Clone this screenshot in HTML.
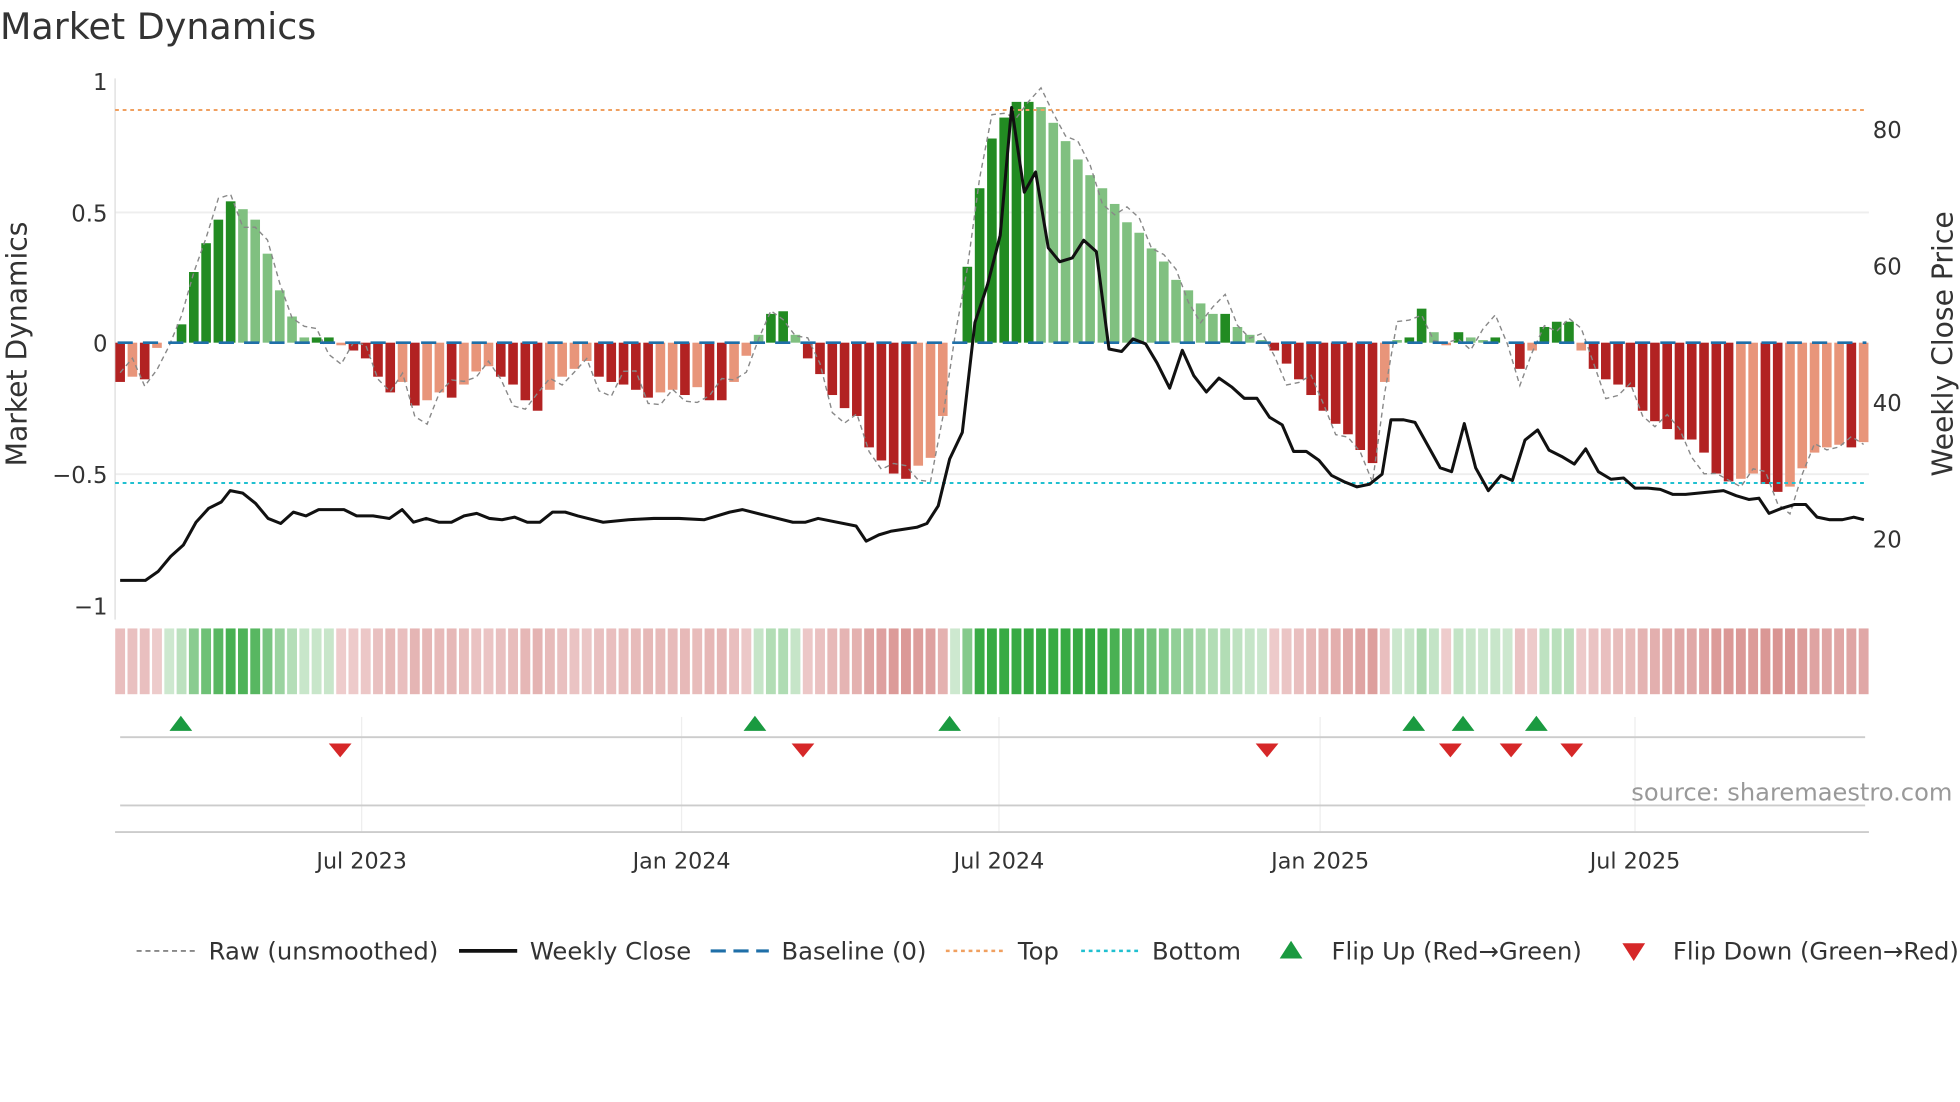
<!DOCTYPE html>
<html><head><meta charset="utf-8"><style>
html,body{margin:0;padding:0;background:#fff;}
svg{display:block;font-family:"DejaVu Sans","Liberation Sans",sans-serif;}
</style></head><body>
<svg id="s" width="1960" height="1102" viewBox="0 0 1550 871.5" xmlns="http://www.w3.org/2000/svg">
<rect width="1550" height="871.5" fill="#fff"/>
<text x="0" y="31" font-size="28.8" fill="#333">Market Dynamics</text>
<g id="grid"></g>
<g id="bars"></g>
<g id="lines"></g>
<g font-size="18" fill="#333" text-anchor="end">
<text x="85" y="71">1</text><text x="85" y="175">0.5</text><text x="85" y="278">0</text>
<text x="85" y="382">−0.5</text><text x="85" y="486">−1</text>
</g>
<g font-size="18" fill="#333">
<text x="1481" y="109">80</text><text x="1481" y="217">60</text><text x="1481" y="325">40</text><text x="1481" y="433">20</text>
</g>
<text transform="translate(21,272) rotate(-90)" font-size="22.3" fill="#333" text-anchor="middle">Market Dynamics</text>
<text transform="translate(1544,272) rotate(-90)" font-size="22.3" fill="#333" text-anchor="middle">Weekly Close Price</text>
<g font-size="17.6" fill="#333" text-anchor="middle">
<text x="286" y="687">Jul 2023</text><text x="539" y="687">Jan 2024</text><text x="790" y="687">Jul 2024</text>
<text x="1044" y="687">Jan 2025</text><text x="1293" y="687">Jul 2025</text>
</g>
<text x="1544" y="633" font-size="19.1" fill="#999" text-anchor="end">source: sharemaestro.com</text>
<g font-size="19.2" fill="#333">
<line x1="108" y1="752" x2="154" y2="752" stroke="#888" stroke-width="1.5" stroke-dasharray="4,3"/>
<text x="165" y="759">Raw (unsmoothed)</text>
<line x1="363" y1="752" x2="409" y2="752" stroke="#111" stroke-width="3"/>
<text x="419" y="759">Weekly Close</text>
<line x1="562" y1="752" x2="608" y2="752" stroke="#1f6fa8" stroke-width="2.5" stroke-dasharray="12,6"/>
<text x="618" y="759">Baseline (0)</text>
<line x1="748" y1="752" x2="794" y2="752" stroke="#f0a060" stroke-width="2" stroke-dasharray="3,3"/>
<text x="805" y="759">Top</text>
<line x1="855" y1="752" x2="901" y2="752" stroke="#20c0d0" stroke-width="2" stroke-dasharray="3,3"/>
<text x="911" y="759">Bottom</text>
<path d="M1012,758 L1021,744 L1030,758Z" fill="#1a9a40"/>
<text x="1053" y="759">Flip Up (Red→Green)</text>
<path d="M1283,746 L1301,746 L1292,760Z" fill="#d62728"/>
<text x="1323" y="759">Flip Down (Green→Red)</text>
</g>
</svg>
<script>
var NS="http://www.w3.org/2000/svg";
function el(p,t,a){var e=document.createElementNS(NS,t);for(var k in a)e.setAttribute(k,a[k]);p.appendChild(e);return e;}
var v=[-0.15,-0.13,-0.14,-0.02,0,0.07,0.27,0.38,0.47,0.54,0.51,0.47,0.34,0.2,0.1,0.02,0.02,0.02,-0.01,-0.03,-0.06,-0.13,-0.19,-0.15,-0.24,-0.22,-0.19,-0.21,-0.16,-0.11,-0.09,-0.13,-0.16,-0.22,-0.26,-0.18,-0.13,-0.1,-0.07,-0.13,-0.15,-0.16,-0.18,-0.21,-0.19,-0.18,-0.2,-0.17,-0.22,-0.22,-0.15,-0.05,0.03,0.11,0.12,0.03,-0.06,-0.12,-0.2,-0.25,-0.28,-0.4,-0.45,-0.5,-0.52,-0.47,-0.44,-0.28,0,0.29,0.59,0.78,0.86,0.92,0.92,0.9,0.84,0.77,0.7,0.64,0.59,0.53,0.46,0.42,0.36,0.31,0.24,0.2,0.15,0.11,0.11,0.06,0.03,0.01,-0.03,-0.08,-0.14,-0.2,-0.26,-0.31,-0.35,-0.41,-0.46,-0.15,0.01,0.02,0.13,0.04,-0.01,0.04,0.02,0.01,0.02,0,-0.1,-0.03,0.06,0.08,0.08,-0.03,-0.1,-0.14,-0.16,-0.17,-0.26,-0.3,-0.33,-0.37,-0.37,-0.42,-0.5,-0.53,-0.52,-0.5,-0.54,-0.57,-0.55,-0.48,-0.42,-0.4,-0.39,-0.4,-0.38];
var s=document.getElementById('s'),g=document.getElementById('grid'),b=document.getElementById('bars'),L=document.getElementById('lines');
function Y(x){return 271-x*207;}
[168,375].forEach(function(y){el(g,'line',{x1:91,x2:1478,y1:y,y2:y,stroke:'#eee','stroke-width':1.5});});
el(g,'line',{x1:91,x2:91,y1:62,y2:490,stroke:'#ddd','stroke-width':1});
[286,539,790,1044,1293].forEach(function(x){el(g,'line',{x1:x,x2:x,y1:567,y2:658,stroke:'#eee','stroke-width':1});});
el(g,'line',{x1:95,x2:1475,y1:583,y2:583,stroke:'#ccc','stroke-width':1.5});
el(g,'line',{x1:95,x2:1475,y1:637,y2:637,stroke:'#ccc','stroke-width':1.5});
el(g,'line',{x1:91,x2:1478,y1:658,y2:658,stroke:'#ccc','stroke-width':1.5});
var raw=[];
for(var i=0;i<v.length;i++){
 var x=95+i*9.71,val=v[i],prev=i?v[i-1]:0,dark=Math.abs(val)>=Math.abs(prev);
 var col=val>=0?(dark?'#228b22':'#80c080'):(dark?'#b22222':'#e8957a');
 var y0=Y(0),y1=Y(val);
 if(Math.abs(val)>0.004)el(b,'rect',{x:x-3.8,y:Math.min(y0,y1),width:7.6,height:Math.abs(y1-y0),fill:col});
 var a=Math.min(1,Math.abs(val)/0.6);
 var hc=val>=0?'rgb('+Math.round(205-150*a)+','+Math.round(232-62*a)+','+Math.round(207-140*a)+')':'rgb('+Math.round(238-22*a)+','+Math.round(205-60*a)+','+Math.round(205-62*a)+')';
 el(b,'rect',{x:x-3.9,y:497,width:7.8,height:52,fill:hc});
 var n=Math.sin(i*1.7)*0.05+Math.cos(i*0.9)*0.04;
 raw.push([x,Y(val*1.03+n)]);
}
el(L,'polyline',{points:raw.map(function(p){return p.join(',');}).join(' '),fill:'none',stroke:'#888','stroke-width':1.1,'stroke-dasharray':'4,3'});
el(L,'line',{x1:91,x2:1476,y1:87,y2:87,stroke:'#f0a060','stroke-width':1.6,'stroke-dasharray':'3,3'});
el(L,'line',{x1:91,x2:1476,y1:382,y2:382,stroke:'#20c0d0','stroke-width':1.6,'stroke-dasharray':'3,3'});
el(L,'line',{x1:93,x2:1476,y1:271,y2:271,stroke:'#1f6fa8','stroke-width':2,'stroke-dasharray':'12,8'});
var pr="95,459 115,459 125,452 135,440 145,431 155,413 165,402 175,397 182,388 192,390 202,398 212,410 222,414 232,405 242,408 252,403 262,403 272,403 282,408 295,408 308,410 318,403 327,413 337,410 347,413 357,413 367,408 377,406 387,410 397,411 407,409 417,413 427,413 437,405 447,405 457,408 477,413 497,411 517,410 537,410 557,411 577,405 587,403 607,408 627,413 637,413 647,410 677,416 685,428 695,423 705,420 725,417 733,414 742,400 751,363 761,342 771,255 781,225 791,186 800,85 810,152 819,136 829,196 838,207 848,204 857,190 867,199 877,276 887,278 896,268 906,272 915,287 925,307 935,277 944,297 954,310 964,299 974,306 984,315 994,315 1004,330 1014,336 1023,357 1033,357 1043,364 1053,376 1063,381 1073,385 1083,383 1093,375 1100,332 1110,332 1119,334 1129,352 1139,370 1148,373 1158,335 1167,370 1177,388 1187,376 1196,380 1206,348 1216,340 1225,356 1235,361 1245,367 1254,355 1264,373 1274,379 1284,378 1293,386 1303,386 1313,387 1323,391 1333,391 1343,390 1353,389 1363,388 1373,392 1383,395 1391,394 1399,406 1409,402 1419,399 1428,399 1437,409 1447,411 1457,411 1466,409 1474,411";
el(L,'polyline',{points:pr,fill:'none',stroke:'#111','stroke-width':2.4,'stroke-linejoin':'round'});
[143,597,751,1118,1157,1215].forEach(function(x){el(L,'path',{d:'M'+(x-9)+',578 L'+x+',566 L'+(x+9)+',578Z',fill:'#1a9a40'});});
[269,635,1002,1147,1195,1243].forEach(function(x){el(L,'path',{d:'M'+(x-9)+',588 L'+(x+9)+',588 L'+x+',599Z',fill:'#d62728'});});
</script>
</body></html>
